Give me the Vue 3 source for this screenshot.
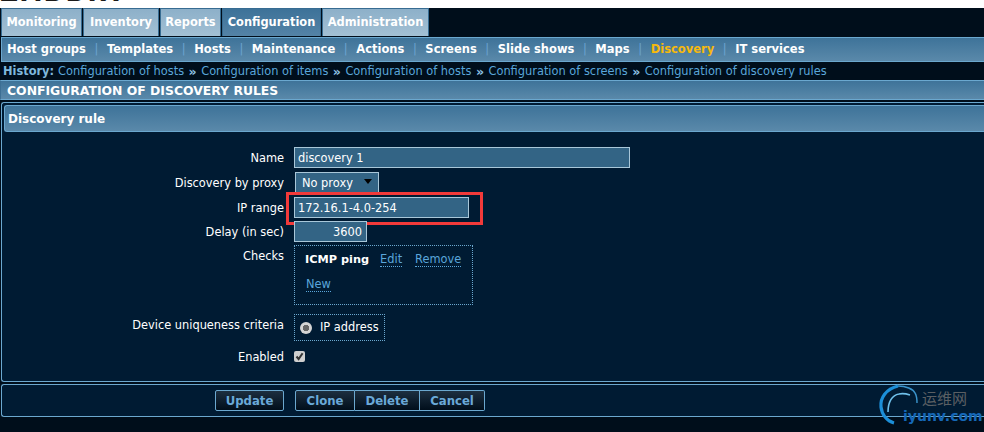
<script setup>
const tabs = [
  { t: 'Monitoring', w: 81 }, { t: 'Inventory', w: 76 }, { t: 'Reports', w: 61 },
  { t: 'Configuration', w: 99, on: true }, { t: 'Administration', w: 107 }
]
const subs = ['Host groups', 'Templates', 'Hosts', 'Maintenance', 'Actions', 'Screens', 'Slide shows', 'Maps', 'Discovery', 'IT services']
const hist = ['Configuration of hosts', 'Configuration of items', 'Configuration of hosts', 'Configuration of screens', 'Configuration of discovery rules']
</script>

<template>
  <div class="page">
    <header class="top"><span class="logo">ZABBIX</span></header>
    <nav class="tabs">
      <a v-for="t in tabs" :key="t.t" class="tab" :class="{ on: t.on }" :style="{ width: t.w + 'px' }">{{ t.t }}</a>
    </nav>
    <nav class="subs">
      <template v-for="(s, i) in subs" :key="s">
        <span v-if="i" class="sep">|</span>
        <a class="sub" :class="{ cur: s === 'Discovery' }">{{ s }}</a>
      </template>
    </nav>
    <div class="hist">
      <b>History:</b>
      <template v-for="(h, i) in hist" :key="i">
        <span v-if="i" class="raquo">»</span>
        <a>{{ h }}</a>
      </template>
    </div>
    <h1 class="title">CONFIGURATION OF DISCOVERY RULES</h1>
    <section class="panel">
      <h2 class="head">Discovery rule</h2>
      <div class="form">
        <div class="row r-name">
          <label>Name</label>
          <div class="input wide">discovery 1</div>
        </div>
        <div class="row r-proxy">
          <label>Discovery by proxy</label>
          <div class="select">No proxy<span class="arrow"></span></div>
        </div>
        <div class="row r-ip">
          <label>IP range</label>
          <div class="input mid">172.16.1-4.0-254</div>
          <span class="mark"></span>
        </div>
        <div class="row r-delay">
          <label>Delay (in sec)</label>
          <div class="input short">3600</div>
        </div>
        <div class="row r-checks">
          <label>Checks</label>
          <div class="checks">
            <div class="check-line"><b>ICMP ping</b><a class="link">Edit</a><a class="link">Remove</a></div>
            <div class="new-line"><a class="link">New</a></div>
          </div>
        </div>
        <div class="row r-uniq">
          <label>Device uniqueness criteria</label>
          <div class="radio-box"><span class="radio"></span>IP address</div>
        </div>
        <div class="row r-en">
          <label>Enabled</label>
          <span class="cb">
            <svg width="9" height="9" viewBox="0 0 9 9"><path d="M1.5 4.5 L3.6 7 L7.6 1.2" fill="none" stroke="#333" stroke-width="2"/></svg>
          </span>
        </div>
      </div>
    </section>
    <footer class="foot">
      <button class="btn solo">Update</button>
      <div class="group">
        <button class="btn w-clone">Clone</button>
        <button class="btn w-del">Delete</button>
        <button class="btn w-can">Cancel</button>
      </div>
    </footer>
    <div class="watermark">
      <svg width="62" height="48" viewBox="0 0 62 48">
        <path d="M20 2 C8 5 2 14 3 23 C4 31 9 37 16 39" fill="none" stroke="#1c8fd8" stroke-width="3.2"/>
        <path d="M10 28 C10 18 14 11 21 10 C25 9 29 10 32 11" fill="none" stroke="#6fc0ea" stroke-width="1.6"/>
        <path d="M20 2 C28 2 35 5 37 9 C39 12 39 16 39 19" fill="none" stroke="#3a94cc" stroke-width="1.4"/>
      </svg>
      <span class="wm-cn">运维网</span>
      <span class="wm-en">iyunv.com</span>
    </div>
  </div>
</template>

<style>
html, body { margin: 0; background: #000e1c; }
</style>

<style scoped>
.page { position: relative; width: 984px; height: 432px; overflow: hidden; background: #000e1b; font: 11.4px/13px "DejaVu Sans", sans-serif; color: #fff; }
.top { height: 8px; background: #fff; overflow: hidden; position: relative; }
.logo { position: absolute; left: 0; bottom: 3px; font: bold 25px/25px "DejaVu Sans", sans-serif; letter-spacing: 3px; color: #1a1a1a; }
.tabs { display: flex; gap: 1px; padding: 0 0 0 1px; height: 28px; margin-bottom: 1px; }
.tab { box-sizing: border-box; display: flex; align-items: center; justify-content: center; height: 28px; font-weight: bold; background: linear-gradient(#8db0c9, #a3c0d4); border: 1px solid #376c92; border-bottom: 0; }
.tab.on { background: linear-gradient(#3d7299, #5483a6); }
.subs { box-sizing: border-box; height: 25px; margin-left: 1px; display: flex; align-items: center; padding-left: 5px; background: linear-gradient(#3e7399, #5a89aa); border: 1px solid #6ba8cf; border-right: 0; font-weight: bold; font-size: 11.5px; }
.sep { font-weight: normal; color: #6ba3d0; width: 21px; text-align: center; }
.cur { color: #f7b90c; }
.hist { height: 18px; display: flex; align-items: center; gap: 4px; padding-left: 3px; color: #5aa6da; box-sizing: border-box; }
.hist b { color: #7fb8dd; }
.raquo { margin: 0 0.5px; font-weight: bold; font-size: 12.5px; color: #8fc3e6; }
.title { box-sizing: border-box; margin: 0; height: 20px; font-size: 12.4px; line-height: 20px; padding-left: 6px; background: linear-gradient(#3e7399, #5a89aa); border: 1px solid #6ba8cf; border-right: 0; border-left-color: #3c6f94; }
.panel { box-sizing: border-box; margin: 2px 0 0 1px; height: 280px; background: #001b33; border: 1px solid #6ba8cf; border-right: 0; border-radius: 3px 0 0 3px; padding-top: 2px; }
.head { box-sizing: border-box; margin: 0 0 0 2px; height: 27px; font-size: 12px; line-height: 26px; padding-left: 3px; background: linear-gradient(#3e7399, #5a89aa); border: 1px solid #6ba8cf; border-right: 0; border-radius: 3px 0 0 3px; }
.form { padding-top: 15px; }
.row { display: flex; align-items: flex-start; position: relative; }
.row > label { box-sizing: border-box; width: 284px; margin-left: -2px; margin-right: 10px; padding-top: 5px; text-align: right; flex: none; }
.input { box-sizing: border-box; height: 21px; line-height: 20px; padding-left: 3px; background: #336485; border: 1px solid #a9c7d9; }
.wide { width: 336px; }
.mid { width: 175px; }
.short { width: 73px; text-align: right; padding-right: 4px; }
.r-name { height: 25px; }
.r-proxy { height: 25px; }
.select { box-sizing: border-box; margin-left: 1px; width: 84px; height: 22px; line-height: 20px; padding-left: 6px; background: #336485; border: 1px solid #a9c7d9; position: relative; }
.arrow { position: absolute; right: 6px; top: 6px; width: 0; height: 0; border: 4px solid transparent; border-top: 5px solid #000; border-bottom: 0; }
.r-ip { height: 24px; }
.mark { position: absolute; left: 284px; top: -5px; width: 197px; height: 33px; box-sizing: border-box; border: 3px solid #f23a3a; }
.r-delay { height: 24px; }
.r-checks { height: 69px; }
.checks { box-sizing: border-box; width: 179px; height: 60px; border: 1px dotted #6ba8cf; padding: 7px 0 0 10px; }
.check-line { display: flex; }
.check-line b { font-size: 11.3px; }
.check-line .link { margin-left: 11px; }
.check-line .link + .link { margin-left: 13px; }
.new-line { margin: 11px 0 0 1px; }
.link { color: #5aa6da; border-bottom: 1px dotted #5aa6da; line-height: 13px; }
.r-uniq { height: 37px; }
.radio-box { box-sizing: border-box; width: 91px; height: 27px; border: 1px dotted #6ba8cf; display: flex; align-items: center; padding-left: 5px; gap: 8px; }
.radio { width: 12px; height: 12px; border-radius: 50%; background: radial-gradient(circle, #666 0 3px, #d4d4d4 3.5px); }
.r-en label { padding-top: 0; }
.cb { box-sizing: border-box; width: 11px; height: 11px; background: #cfcfcf; border-radius: 2px; display: flex; align-items: center; justify-content: center; }
.foot { box-sizing: border-box; margin: 2px 0 0 1px; height: 33px; display: flex; align-items: center; padding-left: 213px; gap: 11px; background: #001b33; border: 1px solid #6ba8cf; border-right: 0; border-radius: 3px 0 0 3px; }
.group { display: flex; }
.btn { box-sizing: border-box; height: 21px; padding: 1px 0 0; font: bold 11.7px/13px "DejaVu Sans", sans-serif; color: #6aa9d8; background: linear-gradient(#1d2f40, #000e1b); border: 1px solid #6ba8cf; border-radius: 2px; }
.solo { width: 69px; }
.w-clone { width: 60px; border-radius: 2px 0 0 2px; }
.w-del { width: 65px; border-left: 0; border-radius: 0; }
.w-can { width: 65px; border-left: 0; border-radius: 0 2px 2px 0; }
.watermark { position: absolute; left: 878px; top: 384px; width: 106px; height: 48px; }
.watermark svg { position: absolute; left: 0; top: 0; }
.wm-cn { position: absolute; left: 44px; top: 4px; font: 15px/20px "Noto Sans CJK SC", sans-serif; color: #5b5f63; }
.wm-en { position: absolute; left: 25px; top: 24px; font: bold 14px/16px "DejaVu Sans", sans-serif; color: #1568b8; }
</style>
